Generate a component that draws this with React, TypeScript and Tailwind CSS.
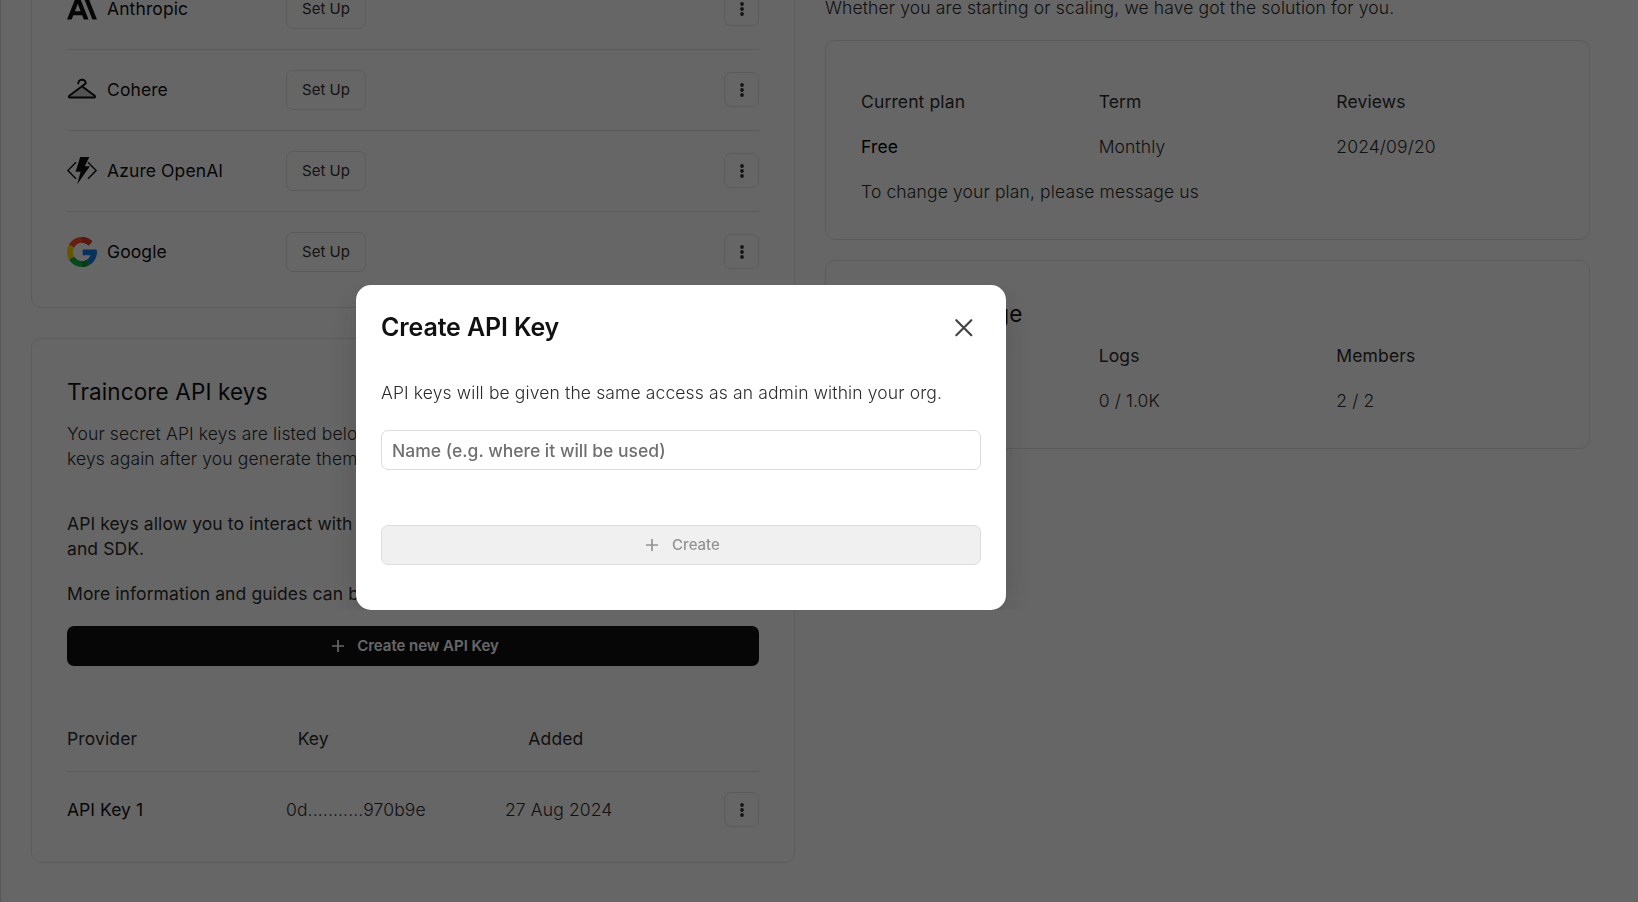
import type { ReactNode } from 'react';
import { SiAnthropic } from 'react-icons/si';
import { PiCoatHangerDuotone } from 'react-icons/pi';

function AzureIcon() {
  return (
    <svg width="30" height="30" viewBox="0 0 30 30" fill="none">
      <path d="M9 6.3 0.9 14.6 9 22.8M21 6.3l8.1 8.3-8.1 8.2" stroke="#111" strokeWidth="1.4" />
      <path d="M13.2 1h9.2l-4.6 9.2h5.1L10.2 28.2l3.4-12.5H8.6z" fill="#111" />
    </svg>
  );
}

function GoogleIcon() {
  return (
    <svg width="30" height="30" viewBox="0 0 512 512">
      <path fill="#167EE6" d="M492.668,211.489l-208.84-0.01c-9.222,0-16.697,7.474-16.697,16.696v66.715c0,9.22,7.475,16.696,16.696,16.696h117.606c-12.878,33.421-36.914,61.41-67.58,79.194L384,477.589c80.442-46.523,128-128.152,128-219.53c0-13.011-0.959-22.312-2.877-32.785C507.665,217.317,500.757,211.489,492.668,211.489z" />
      <path fill="#12B347" d="M256,411.826c-57.554,0-107.798-31.446-134.783-77.979l-86.806,50.034C78.586,460.443,161.34,512,256,512c46.437,0,90.254-12.503,128-34.292v-0.119l-50.147-86.81C310.915,404.083,284.371,411.826,256,411.826z" />
      <path fill="#0F993E" d="M384,477.708v-0.119l-50.147-86.81c-22.938,13.303-49.48,21.047-77.853,21.047V512C302.437,512,346.256,499.497,384,477.708z" />
      <path fill="#FFD500" d="M100.174,256c0-28.369,7.742-54.91,21.043-77.847l-86.806-50.034C12.502,165.746,0,209.444,0,256s12.502,90.254,34.411,127.881l86.806-50.034C107.916,310.91,100.174,284.369,100.174,256z" />
      <path fill="#FF4B26" d="M256,100.174c37.531,0,72.005,13.336,98.932,35.519c6.643,5.472,16.298,5.077,22.383-1.008l47.27-47.27c6.904-6.904,6.412-18.205-0.963-24.603C378.507,23.673,319.807,0,256,0C161.34,0,78.586,51.557,34.411,128.119l86.806,50.034C148.202,131.62,198.446,100.174,256,100.174z" />
      <path fill="#D93F21" d="M354.932,135.693c6.643,5.472,16.299,5.077,22.383-1.008l47.27-47.27c6.903-6.904,6.411-18.205-0.963-24.603C378.507,23.672,319.807,0,256,0v100.174C293.53,100.174,328.005,113.51,354.932,135.693z" />
    </svg>
  );
}

function PlusIcon() {
  return (
    <svg width="20" height="20" viewBox="0 0 20 20" fill="none">
      <path d="M10 4v12M4 10h12" stroke="currentColor" strokeWidth="1.7" />
    </svg>
  );
}

function MenuButton({ className = '' }: { className?: string }) {
  return (
    <button
      className={`flex size-[35px] items-center justify-center rounded-[7px] border border-[#e3e3e3] ${className}`}
    >
      <svg width="20" height="20" viewBox="0 0 20 20" fill="#333" className="shrink-0">
        <circle cx="10" cy="5" r="1.9" />
        <circle cx="10" cy="10" r="1.9" />
        <circle cx="10" cy="15" r="1.9" />
      </svg>
    </button>
  );
}

function Card({ children, className = '' }: { children: ReactNode; className?: string }) {
  return (
    <section className={`rounded-[10px] border border-[#e3e3e3] px-[35px] pb-[35px] ${className}`}>
      {children}
    </section>
  );
}

function CardTitle({ children }: { children: ReactNode }) {
  return (
    <h2 className="mb-3 text-[22.5px] leading-[35px] font-normal tracking-[0.13px] text-[#111]">
      {children}
    </h2>
  );
}

const providers = [
  { name: 'Anthropic', icon: <SiAnthropic size={30} color="#111" /> },
  { name: 'Cohere', icon: <PiCoatHangerDuotone size={30} color="#111" /> },
  { name: 'Azure OpenAI', icon: <AzureIcon /> },
  { name: 'Google', icon: <GoogleIcon /> },
];

function Providers() {
  return (
    <Card className="pt-[35px]">
      {providers.map((p) => (
        <div
          key={p.name}
          className="grid grid-cols-[1fr_1fr_1fr_35px] items-center border-b border-[#e0e0e0] py-5 last:border-b-0 last:pb-0"
        >
          <div className="flex items-center gap-2.5 font-normal tracking-[0.1px] text-[#111]">
            {p.icon}
            <span className="pb-0.5">{p.name}</span>
          </div>
          <button className="h-10 w-20 rounded-[7px] border border-[#e3e3e3] pb-px text-[15px] font-normal tracking-normal text-[#333]">
            Set Up
          </button>
          <span />
          <MenuButton className="mb-px" />
        </div>
      ))}
    </Card>
  );
}

function ApiKeys() {
  return (
    <Card className="pt-[35px]">
      <CardTitle>Traincore API keys</CardTitle>
      <p className="whitespace-nowrap">
        Your secret API keys are listed below. Please note that we do not display your
        <br />
        keys again after you generate them.
      </p>
      <p className="mt-10 font-normal tracking-[0.1px] whitespace-nowrap">
        API keys allow you to interact with the platform using our API
        <br />
        and SDK.
      </p>
      <p className="mt-5 font-normal tracking-[0.1px] whitespace-nowrap">
        More information and guides can be found in the docs.
      </p>
      <button className="mt-5 flex h-10 w-full items-center justify-center gap-[9px] rounded-[7px] bg-[#111] pl-px text-[15px] font-semibold tracking-[-0.04px] text-white">
        <PlusIcon />
        <span className="pb-px">Create new API Key</span>
      </button>
      <div className="mt-[60px] grid grid-cols-3 border-b border-[#e0e0e0] pb-5 font-normal">
        <span>Provider</span>
        <span>Key</span>
        <span>Added</span>
      </div>
      <div className="grid grid-cols-[1fr_1fr_1fr_35px] items-center pt-5">
        <span className="font-normal tracking-[0.05px] text-[#111]">API Key 1</span>
        <span>0d...........970b9e</span>
        <span>27 Aug 2024</span>
        <MenuButton />
      </div>
    </Card>
  );
}

function Plan() {
  return (
    <Card className="pt-12">
      <div className="grid grid-cols-3 gap-5">
        <span className="font-normal">Current plan</span>
        <span className="font-normal">Term</span>
        <span className="font-normal">Reviews</span>
        <span className="font-normal text-black">Free</span>
        <span>Monthly</span>
        <span>2024/09/20</span>
      </div>
      <p className="mt-5">To change your plan, please message us</p>
    </Card>
  );
}

function Usage() {
  return (
    <Card className="pt-[35px]">
      <CardTitle>Account usage</CardTitle>
      <div className="grid grid-cols-3 gap-5">
        <span />
        <span className="font-normal">Logs</span>
        <span className="font-normal">Members</span>
        <span />
        <span>0 / 1.0K</span>
        <span>2 / 2</span>
      </div>
    </Card>
  );
}

function CreateKeyDialog() {
  return (
    <div className="fixed inset-0 bg-black/60 pt-[285px] pl-[356px]">
      <div
        role="dialog"
        className="flex h-[325px] w-[650px] flex-col rounded-[15px] bg-white px-[25px] pt-[25px] shadow-[0_10px_38px_-10px_rgba(22,23,24,0.35)] [clip-path:inset(0_-40px_0_-40px)]"
      >
        <div className="flex h-[35px] items-center justify-between pr-[2.5px]">
          <h1 className="text-[25px] font-semibold tracking-[-0.13px] text-[#111]">Create API Key</h1>
          <svg width="30" height="30" viewBox="0 0 30 30" fill="none">
            <path d="m7.3 7.2 15 15m0-15-15 15" stroke="#444" strokeWidth="2.2" strokeLinecap="round" />
          </svg>
        </div>
        <p className="mt-[35px]">
          API keys will be given the same access as an admin within your org.
        </p>
        <input
          className="mt-[25px] h-10 w-full shrink-0 rounded-[7px] border border-[#ddd] px-2.5 pt-px font-medium tracking-normal placeholder:text-[#707070]"
          placeholder="Name (e.g. where it will be used)"
        />
        <button className="mt-[55px] flex h-10 w-full shrink-0 items-center justify-center gap-2.5 rounded-[7px] border border-[#ddd] bg-[#f0f0f0] text-[15px] font-medium tracking-normal text-[#939393]">
          <PlusIcon />
          <span className="pb-px">Create</span>
        </button>
      </div>
    </div>
  );
}

export default function App() {
  return (
    <div className="h-screen overflow-hidden border-l border-[#ddd] bg-white font-['Inter',sans-serif] text-[17.5px] leading-[25px] font-light tracking-[0.13px] text-[#2c2c2c]">
      <main className="grid grid-cols-[764px_1fr] items-start gap-[30px] pr-12 pl-[30px]">
        <div className="mt-[-67px] flex flex-col gap-[30px]">
          <Providers />
          <ApiKeys />
        </div>
        <div className="mt-[-5px] flex flex-col gap-5">
          <p>Whether you are starting or scaling, we have got the solution for you.</p>
          <Plan />
          <Usage />
        </div>
      </main>
      <CreateKeyDialog />
    </div>
  );
}
